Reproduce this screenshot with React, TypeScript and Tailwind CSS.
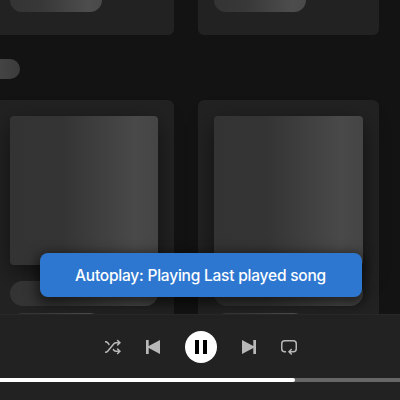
import React from 'react';

function Card({ width, art }: { width: string; art: string }) {
  return (
    <div className={`h-[270px] shrink-0 rounded-[6px] bg-[#222222] px-4 pt-4 ${width}`}>
      <div
        className={`h-[149px] rounded-[4px] bg-[linear-gradient(90deg,#333333_0%,#343434_35%,#494949_85%,#454545_100%)] shadow-[0_8px_24px_rgba(0,0,0,0.5)] ${art}`}
      />
      <div
        className={`mt-4 h-[25px] rounded-full bg-[linear-gradient(90deg,#333333_0%,#353535_35%,#494949_85%,#454545_100%)] ${art}`}
      />
      <div className="mt-[7px] h-[25px] w-[92px] rounded-full bg-[linear-gradient(90deg,#333333_0%,#383838_35%,#4d4d4d_85%,#494949_100%)]" />
    </div>
  );
}

function CardEnd({ width }: { width: string }) {
  return (
    <div className={`h-[35px] shrink-0 rounded-b-[6px] bg-[#222222] px-4 ${width}`}>
      <div className="h-3 w-[92px] rounded-b-[12px] bg-[linear-gradient(90deg,#343434_0%,#383838_35%,#4d4d4d_85%,#494949_100%)]" />
    </div>
  );
}

function Icon({ d }: { d: string }) {
  return (
    <svg viewBox="0 0 16 16" className="size-4 shrink-0 fill-[#b8b8b8]">
      <path d={d} />
    </svg>
  );
}

const SHUFFLE =
  'M13.151.922a.75.75 0 10-1.06 1.06L13.109 3H11.16a3.75 3.75 0 00-2.873 1.34l-6.173 7.356A2.25 2.25 0 01.39 12.5H0V14h.391a3.75 3.75 0 002.873-1.34l6.173-7.356a2.25 2.25 0 011.724-.804h1.947l-1.017 1.018a.75.75 0 001.06 1.06L15.98 3.75 13.15.922zM.391 3.5H0V2h.391c1.109 0 2.16.49 2.873 1.34L4.89 5.277l-.979 1.167-1.796-2.14A2.25 2.25 0 00.39 3.5zM7.5 10.723l.98-1.167.957 1.14a2.25 2.25 0 001.724.804h1.947l-1.017-1.018a.75.75 0 111.06-1.06l2.829 2.828-2.829 2.828a.75.75 0 11-1.06-1.06L13.109 13H11.16a3.75 3.75 0 01-2.873-1.34l-.787-.938z';
const REPEAT =
  'M0 4.75A3.75 3.75 0 013.75 1h8.5A3.75 3.75 0 0116 4.75v5a3.75 3.75 0 01-3.75 3.75H9.81l1.018 1.018a.75.75 0 11-1.06 1.06L6.939 12.75l2.829-2.828a.75.75 0 111.06 1.06L9.811 12h2.439a2.25 2.25 0 002.25-2.25v-5a2.25 2.25 0 00-2.25-2.25h-8.5A2.25 2.25 0 001.5 4.75v5A2.25 2.25 0 003.75 12H5v1.5H3.75A3.75 3.75 0 010 9.75v-5z';

export default function App() {
  return (
    <div className="relative flex h-[400px] w-[400px] flex-col overflow-hidden bg-[#131313] font-['Inter','Liberation_Sans',sans-serif]">
      <main className="h-[314px] shrink-0 overflow-hidden">
        <div className="-ml-1.5 flex gap-6">
          <CardEnd width="w-[180px]" />
          <CardEnd width="w-[181px]" />
        </div>
        <div className="mt-6 h-5 w-5 rounded-r-full bg-linear-to-r from-[#444444] to-[#3b3b3b]" />
        <div className="-ml-1.5 mt-[21px] flex gap-6">
          <Card width="w-[180px]" art="w-[148px]" />
          <Card width="w-[181px]" art="w-[149px]" />
        </div>
      </main>

      <footer className="h-[86px] shrink-0 border-t border-[#282828] bg-[#222222]">
        <div className="flex h-16 items-center justify-center gap-6 pl-[2px]">
          <Icon d={SHUFFLE} />
          <Icon d="M1 1h2.7v6.1L15 1v14L3.7 8.9V15H1z" />
          <button className="flex size-8 items-center justify-center gap-1 rounded-full bg-white" aria-label="Pause">
            <span className="h-3.5 w-1 bg-black" />
            <span className="h-3.5 w-1 bg-black" />
          </button>
          <Icon d="M15 1h-2.7v6.1L1 1v14l11.3-6.1V15H15z" />
          <Icon d={REPEAT} />
        </div>
        <div className="-mt-px h-1 bg-[#666666]">
          <div className="h-1 w-[295px] rounded-r-[2px] bg-white" />
        </div>
      </footer>

      <div
        role="status"
        className="absolute left-[39.5px] top-[253px] flex h-11 w-[322px] items-center justify-center whitespace-nowrap rounded-[8px] bg-[#2e77d0] pt-px text-[15.5px] font-medium tracking-[-0.22px] text-white shadow-[0_4px_12px_4px_rgba(0,0,0,0.5)]"
      >
        Autoplay: Playing Last played song
      </div>
    </div>
  );
}
